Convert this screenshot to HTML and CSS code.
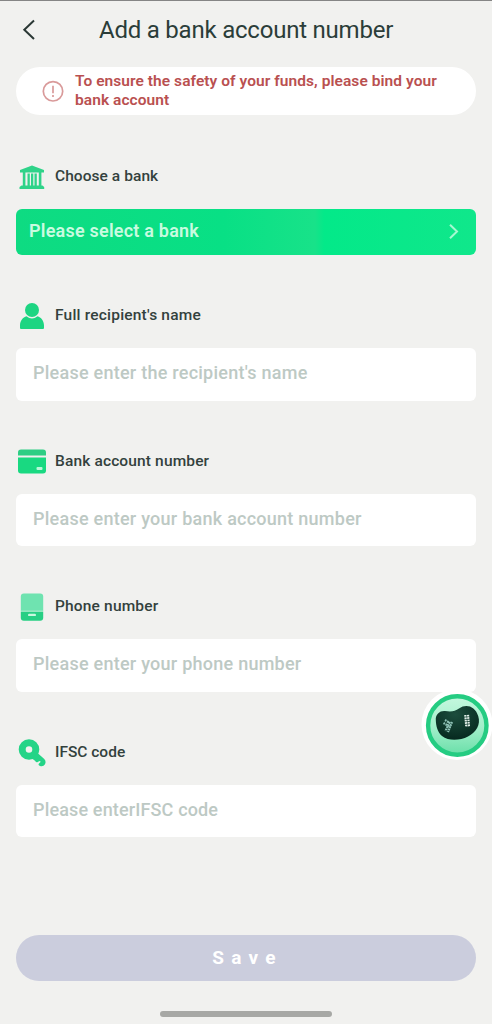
FILE: index.html
```html
<!DOCTYPE html>
<html lang="en">
<head>
<meta charset="utf-8">
<title>Add a bank account number</title>
<link rel="stylesheet" href="styles.css">
</head>
<body>
<div class="screen">
  <header class="header">
    <svg class="back" width="16" height="24" viewBox="0 0 16 24"><path d="M13 2.500 3.300 11.700 13 21"/></svg>
    <h1 class="title">Add a bank account number</h1>
  </header>
  <div class="notice">
    <svg class="notice-icon" width="22" height="22" viewBox="0 0 22 22"><circle cx="11" cy="11.300" r="9.700"/><path d="M11 5.800v7.500M11 15v2"/></svg>
    <p class="notice-text">To ensure the safety of your funds, please bind your<br>bank account</p>
  </div>
  <main class="form">
    <section class="group">
      <div class="label-row">
        <svg class="icon" width="32" height="32" viewBox="0 0 32 32"><path fill="#2fd389" d="M16 5.500 28 10V12.500H4V10ZM6.800 12h2.600v14H6.800ZM11.500 13.500h2.300V26h-2.300ZM15 13.500h2.300V26H15ZM18.500 13.500h2.300V26h-2.300ZM22.800 12h2.600v14h-2.600ZM5.500 25.600h21l1.700 1.500V29H3.500v-1.900Z"/></svg>
        <span class="label l-bank">Choose a bank</span>
      </div>
      <div class="select"><span class="select-text">Please select a bank</span>
        <svg width="12" height="16" viewBox="0 0 12 16"><path class="chevron" d="M2 .8 9 7.500 2 14.200"/></svg>
      </div>
    </section>
    <section class="group">
      <div class="label-row">
        <svg class="icon" width="32" height="32" viewBox="0 0 32 32"><g fill="#1dd582"><circle cx="16" cy="11" r="7"/><path d="M4 29v-2.500C4 21.500 7 18.300 10.500 17.200Q16 21.600 21.500 17.200C25 18.300 28 21.500 28 26.500V29q0 1-1 1H5q-1 0-1-1Z"/></g></svg>
        <span class="label l-name">Full recipient's name</span>
      </div>
      <div class="field"><span class="p-name">Please enter the recipient's name</span></div>
    </section>
    <section class="group">
      <div class="label-row">
        <svg class="icon" width="32" height="32" viewBox="0 0 32 32"><path fill="#2dce84" d="M2 10.500V7.500q0-3 3-3h22q3 0 3 3v3Z"/><path fill="#19d981" d="M2 12.500h28v13q0 3-3 3H5q-3 0-3-3Z"/><rect x="20.500" y="22" width="6" height="3" rx="1" fill="#b9f7d8"/></svg>
        <span class="label l-account">Bank account number</span>
      </div>
      <div class="field"><span class="p-account">Please enter your bank account number</span></div>
    </section>
    <section class="group">
      <div class="label-row">
        <svg class="icon" width="32" height="32" viewBox="0 0 32 32"><path fill="#6fe3b0" d="M4.800 21V6.500q0-3 3-3h16.400q3 0 3 3V21Z"/><path fill="#b9f0d5" d="M4.800 20.700h22.400v1.300H4.800Z"/><path fill="#27cf84" d="M4.800 21.700h22.400v6q0 3-3 3H7.800q-3 0-3-3Z"/><rect x="12" y="23.700" width="8" height="2.400" rx="1.200" fill="#c9f7df"/></svg>
        <span class="label l-phone">Phone number</span>
      </div>
      <div class="field"><span class="p-phone">Please enter your phone number</span></div>
    </section>
    <section class="group">
      <div class="label-row">
        <svg class="icon" width="32" height="32" viewBox="0 0 32 32"><circle cx="13" cy="13.500" r="6.800" fill="none" stroke="#24d487" stroke-width="7"/><path fill="#24d487" d="M21.500 17 28 22.700Q30.500 25 29 28.200Q27.300 31 24 30Q21.300 28.800 23.500 27L24.800 25.800L23.500 25L21.300 26.300Q19.700 26.500 19.300 25L16 22.500Z"/></svg>
        <span class="label l-code">IFSC code</span>
      </div>
      <div class="field"><span class="p-code">Please enterIFSC code</span></div>
    </section>
  </main>
  <button class="save" type="button">Save</button>
  <div class="home-bar"></div>
  <svg class="assistant" width="72" height="72" viewBox="0 0 72 72">
    <defs>
      <linearGradient id="mint" x1="0" y1="0" x2="0" y2="1"><stop offset="0" stop-color="#c5f8df"/><stop offset=".55" stop-color="#a0eec9"/><stop offset="1" stop-color="#69dfa8"/></linearGradient>
      <radialGradient id="face" cx=".45" cy=".25" r=".75"><stop offset="0" stop-color="#1c4d3d"/><stop offset="1" stop-color="#06291f"/></radialGradient>
    </defs>
    <circle cx="36" cy="36.500" r="35.500" fill="#fff"/>
    <circle cx="36.300" cy="37.500" r="29.200" fill="url(#mint)" stroke="#25cc82" stroke-width="4.400"/>
    <path d="M14.800 32C14.500 26 19 22.500 24 23C30 23.800 34 23.500 38 20.500C45 15.500 54 18 57.200 28C60 37 55 44 47 48.500C39 52.500 28 53.500 21 48C16.500 44 15 38 14.800 32Z" fill="url(#face)"/>
    <g fill="none" stroke-width="2.200" stroke-dasharray="1.700 .7">
      <path stroke="#e1eee8" d="m44.300 27 1 12M47 26.800l1 12"/>
      <path stroke="#8fc2b7" d="m24 32 5 3M22.500 35l6.500 4M31 34l-4 10M28.500 34l-4 9"/>
    </g>
  </svg>
</div>
</body>
</html>
```
FILE: styles.css
```css
* { box-sizing: border-box; }
body { margin: 0; background: #f1f1ef; }
.screen {
  position: relative;
  display: flex;
  flex-direction: column;
  width: 492px;
  height: 1024px;
  padding: 0 16px;
  overflow: hidden;
  border-top: 1px solid #858585;
  background: #f1f1ef;
  color: #33413d;
  font-family: Roboto, "Liberation Sans", sans-serif;
}
.header { display: flex; align-items: center; height: 58px; padding-left: 5px; }
.back { fill: none; stroke: #2b3835; stroke-width: 2; }
.title { margin: 0 0 0 62px; font-size: 24px; font-weight: 400; line-height: 30px; letter-spacing: -.22px; white-space: nowrap; color: #2b3d39; }
.notice { display: flex; align-items: center; height: 48px; margin-top: 8px; padding-left: 26px; border-radius: 24px; background: #fff; }
.notice-icon { fill: none; stroke: #d99a9a; stroke-width: 1.700; }
.notice-text { margin: 0 0 0 11px; font-size: 15.500px; font-weight: 600; line-height: 19px; letter-spacing: .06px; white-space: nowrap; color: #b95050; }
.form { display: flex; flex-direction: column; gap: 43px; margin-top: 44px; }
.label-row { display: flex; align-items: center; height: 34px; margin-bottom: 16px; gap: 7px; }
.label { font-size: 15.500px; font-weight: 500; line-height: 20px; white-space: nowrap; }
.l-bank { letter-spacing: .06px; }
.l-name { letter-spacing: .2px; }
.l-account { letter-spacing: .14px; }
.l-phone { letter-spacing: .17px; }
.l-code { letter-spacing: 0; }
.field, .select { display: flex; align-items: center; border-radius: 6px; white-space: nowrap; font-size: 18px; line-height: 24px; }
.field { height: 52.500px; padding: 0 17px 2px; background: #fff; color: #bdc9c4; font-weight: 500; letter-spacing: .25px; }
.p-code { letter-spacing: .15px; }
.select { justify-content: space-between; height: 46px; padding: 0 16px 0 13px; background: linear-gradient(90deg, #0edb82, #08e085 45%, #18e289 65%, #03e989 67%, #10e78b); color: #c9fbe0; font-weight: 600; letter-spacing: .22px; }
.select-text { margin-bottom: 2px; }
.chevron { fill: none; stroke: #a5f8d1; stroke-width: 2; }
.save { height: 46px; margin-top: 98px; padding: 0 0 2px 3px; border: 0; border-radius: 23px; background: #cbcddd; color: #fff; font-family: inherit; font-size: 19px; font-weight: 700; letter-spacing: 7.200px; }
.home-bar { align-self: center; width: 172px; height: 6px; margin-top: 30px; border-radius: 3px; background: #a7a8a5; }
.assistant { position: absolute; top: 687px; left: 421px; }
```
